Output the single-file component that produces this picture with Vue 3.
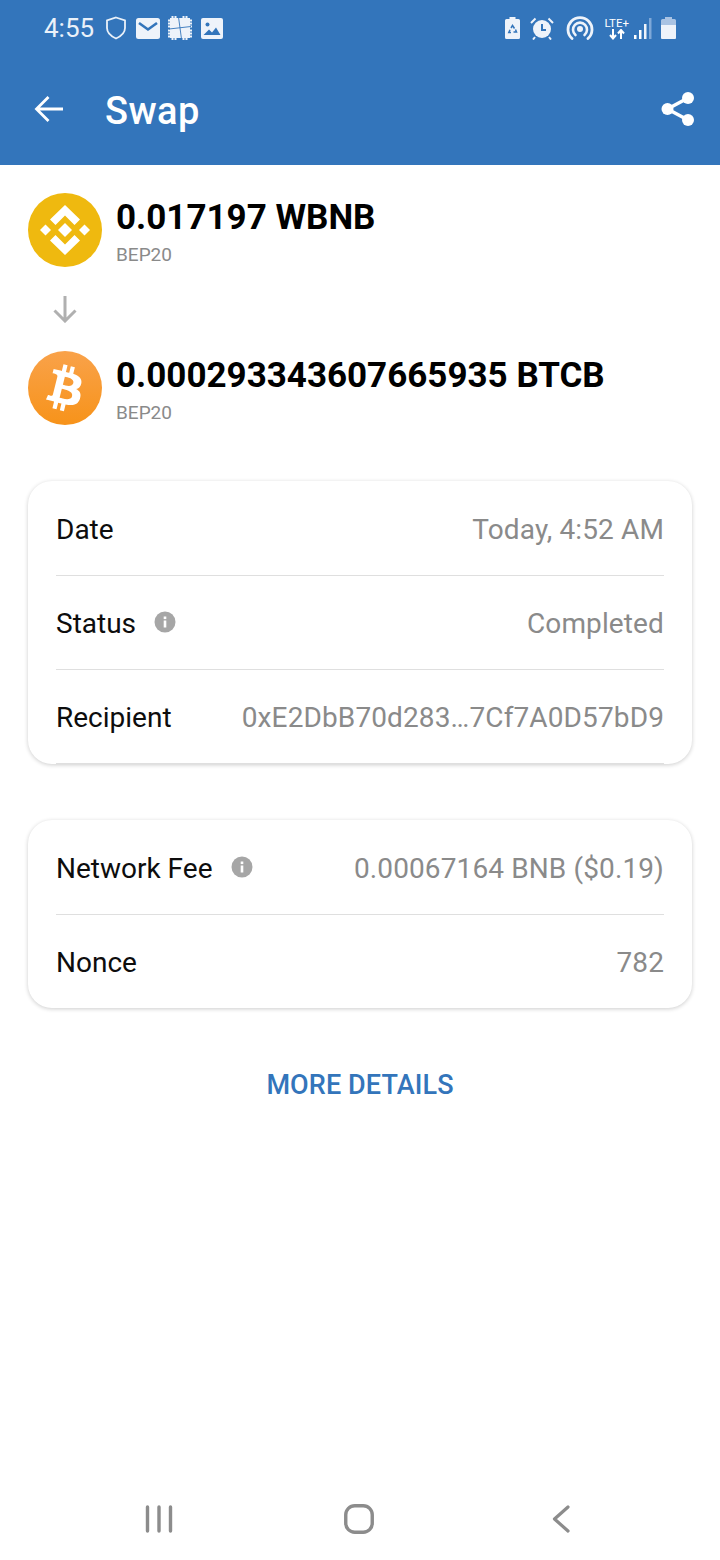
<template>
  <div class="screen">
    <header class="top">
      <div class="status">
        <div class="status-left">
          <span class="clock">4:55</span>
          <svg class="shield" width="20" height="24" viewBox="0 0 20 24"><path d="M10 1.500 19 4.500V12c0 4.500-3.500 8-9 10.500C4.500 20 1 16.500 1 12V4.500Z" fill="none" stroke="#eaf1f9" stroke-width="1.800"/></svg>
          <svg width="24" height="21" viewBox="0 0 24 21"><rect width="24" height="21" rx="2.500" fill="#eef3fa"/><path d="M3 5 12 11.500 21 5" fill="none" stroke="#3375bb" stroke-width="2.600"/></svg>
          <svg class="patch" width="24" height="24" viewBox="0 0 24 24"><rect x="2" y="2" width="20" height="20" fill="#eef3fa"/><path d="M0 4.500H4M0 7.500H4M0 10.500H4M0 14.500H4M0 17.500H4M0 20.500H4M20 4.500H24M20 7.500H24M20 10.500H24M20 14.500H24M20 17.500H24M20 20.500H24M4.500 0V4M7.500 0V4M15.500 0V4M18.500 0V4M4.500 20V24M7.500 20V24M15.500 20V24M18.500 20V24" stroke="#eef3fa" stroke-width="2"/><path d="M10.500 1 13.500 23M1 13 23 10.500" stroke="#3375bb" stroke-width="0.900"/></svg>
          <svg class="photo" width="22" height="21" viewBox="0 0 22 21"><rect width="22" height="21" rx="2" fill="#eef3fa"/><circle cx="6.500" cy="6.500" r="2" fill="#3375bb"/><path d="M2.500 17 8 11.500l3 3 4-5 4.500 7.500Z" fill="#3375bb"/></svg>
        </div>
        <div class="status-right">
          <svg width="15" height="22" viewBox="0 0 15 22"><path d="M4.500 0h6v2H13.500a1.500 1.500 0 0 1 1.500 1.500V20.500A1.500 1.500 0 0 1 13.500 22H1.500A1.500 1.500 0 0 1 0 20.500V3.500A1.500 1.500 0 0 1 1.500 2H4.500Z" fill="#eef3fa"/><path d="M6 11 7.500 8.500 9.500 11.500M10.500 12.500 11.500 15H8.500M6 15.500H3.800L5 12.800" fill="none" stroke="#3375bb" stroke-width="1.500"/></svg>
          <svg width="24" height="23" viewBox="0 0 24 23" style="margin-left:10px"><circle cx="12" cy="12" r="9" fill="#eef3fa"/><path d="M12 7v6h4" fill="none" stroke="#3375bb" stroke-width="2"/><path d="M1 6 5.500 1.500M23 6 18.500 1.500M5 20 3 22.500M19 20 21 22.500" stroke="#eef3fa" stroke-width="2"/></svg>
          <svg width="28" height="24" viewBox="0 0 28 24" style="margin-left:12px"><path d="M6 22.500A12 12 0 1 1 22 22.500" fill="none" stroke="#eef3fa" stroke-width="2.800" stroke-linecap="round"/><path d="M9.500 19A7 7 0 1 1 18.500 19" fill="none" stroke="#eef3fa" stroke-width="2.600" stroke-linecap="round"/><circle cx="14" cy="13" r="3" fill="#eef3fa"/></svg>
          <div class="lte">
            <span>LTE+</span>
            <svg width="16" height="11" viewBox="0 0 16 11"><path d="M4 0V9M1 6l3 3.500L7 6M12 10V1.500M9 4.500l3-3.500 3 3.500" fill="none" stroke="#fff" stroke-width="2"/></svg>
          </div>
          <svg width="18" height="21" viewBox="0 0 18 21" style="margin-left:5px"><rect x="0" y="17" width="2.500" height="4" fill="#fff"/><rect x="5" y="12" width="2.500" height="9" fill="#fff"/><rect x="10" y="6" width="2.500" height="15" fill="#eef3fa"/><rect x="15" y="0" width="2.500" height="21" fill="#7ea8d8"/></svg>
          <svg width="15" height="22" viewBox="0 0 15 22" style="margin-left:9px"><path d="M4 0h7v2H13.500A1.500 1.500 0 0 1 15 3.500V20.500A1.500 1.500 0 0 1 13.500 22H1.500A1.500 1.500 0 0 1 0 20.500V3.500A1.500 1.500 0 0 1 1.500 2H4Z" fill="#a9c3e3"/><path d="M0 8H15V20.500A1.500 1.500 0 0 1 13.500 22H1.500A1.500 1.500 0 0 1 0 20.500Z" fill="#eef3fa"/></svg>
        </div>
      </div>
      <div class="toolbar">
        <svg class="back" width="30" height="28" viewBox="0 0 30 28"><path d="M29 14H3M14.500 2 2.500 14l12 12" fill="none" stroke="#fff" stroke-width="2.800"/></svg>
        <span class="title">Swap</span>
        <svg class="share" width="34" height="36" viewBox="0 0 34 36"><path d="M27 7 6.500 18 27 29" fill="none" stroke="#fff" stroke-width="3.500"/><circle cx="27" cy="7" r="6" fill="#fff"/><circle cx="6.500" cy="18" r="6" fill="#fff"/><circle cx="27" cy="29" r="6" fill="#fff"/></svg>
      </div>
    </header>

    <section class="assets">
      <div class="asset">
        <svg width="74" height="74" viewBox="0 0 74 74">
          <circle cx="37" cy="37" r="37" fill="#efb90f"/>
          <g fill="#fff">
            <path d="M37 12 52 26.500 46.500 32 37 22.500 27.500 32 22 26.500Z"/>
            <path d="M37 62 52 47.500 46.500 42 37 51.500 27.500 42 22 47.500Z"/>
            <path d="M37 30 44 37 37 44 30 37Z"/>
            <path d="M17.500 31.500 23 37 17.500 42.500 12 37Z"/>
            <path d="M56.500 31.500 62 37 56.500 42.500 51 37Z"/>
          </g>
        </svg>
        <div class="asset-text">
          <div class="amount">0.017197 WBNB</div>
          <div class="chain">BEP20</div>
        </div>
      </div>
      <svg class="down" width="26" height="28" viewBox="0 0 26 28"><path d="M13 1V26M2.500 15.500 13 26 23.500 15.500" fill="none" stroke="#b0b0b0" stroke-width="3"/></svg>
      <div class="asset">
        <svg width="74" height="74" viewBox="0 0 24 24">
          <defs>
            <linearGradient id="btc" x1="0" y1="0" x2="0" y2="1">
              <stop offset="0" stop-color="#f9a24a"/>
              <stop offset="1" stop-color="#f7931a"/>
            </linearGradient>
          </defs>
          <circle cx="12" cy="12" r="12" fill="url(#btc)"/>
          <path fill="#fff" d="M17.310 10.430c.24-1.590-.974-2.450-2.640-3.030l.54-2.153-1.315-.33-.525 2.107c-.345-.087-.705-.167-1.064-.25l.526-2.127-1.320-.33-.54 2.165c-.285-.067-.565-.132-.84-.2l-1.815-.45-.35 1.407s.975.225.955.236c.535.136.63.486.615.766l-1.477 5.920c-.075.166-.24.406-.614.314.015.02-.96-.24-.96-.24l-.66 1.510 1.710.426.93.242-.54 2.190 1.320.327.54-2.170c.36.1.705.19 1.050.273l-.51 2.154 1.320.33.545-2.190c2.240.427 3.930.257 4.640-1.774.57-1.637-.03-2.580-1.217-3.196.854-.193 1.500-.76 1.680-1.930h.01zm-3.010 4.220c-.404 1.640-3.157.75-4.050.53l.72-2.900c.896.23 3.757.67 3.330 2.370zm.41-4.240c-.37 1.490-2.662.735-3.405.55l.654-2.640c.744.18 3.137.524 2.750 2.084v.006z"/>
        </svg>
        <div class="asset-text">
          <div class="amount">0.000293343607665935 BTCB</div>
          <div class="chain">BEP20</div>
        </div>
      </div>
    </section>

    <section class="card">
      <div v-for="row in detailRows" :key="row.label" class="row">
        <span class="label">{{ row.label }}</span>
        <svg v-if="row.info" class="info" width="22" height="22" viewBox="0 0 22 22"><circle cx="11" cy="11" r="10.500" fill="#a6a6a6"/><rect x="9.700" y="9.500" width="2.600" height="7" fill="#fff"/><rect x="9.700" y="5.500" width="2.600" height="2.600" fill="#fff"/></svg>
        <span class="value">{{ row.value }}</span>
      </div>
    </section>

    <section class="card card-fee">
      <div v-for="row in feeRows" :key="row.label" class="row">
        <span class="label">{{ row.label }}</span>
        <svg v-if="row.info" class="info" width="22" height="22" viewBox="0 0 22 22"><circle cx="11" cy="11" r="10.500" fill="#a6a6a6"/><rect x="9.700" y="9.500" width="2.600" height="7" fill="#fff"/><rect x="9.700" y="5.500" width="2.600" height="2.600" fill="#fff"/></svg>
        <span class="value">{{ row.value }}</span>
      </div>
    </section>

    <div class="more">MORE DETAILS</div>

    <nav class="navbar">
      <svg width="28" height="28" viewBox="0 0 28 28"><path d="M2.500 2V26M14 2V26M25.500 2V26" stroke="#8c8c8c" stroke-width="3.400" stroke-linecap="round"/></svg>
      <svg class="nav-home" width="30" height="30" viewBox="0 0 30 30"><rect x="1.750" y="1.750" width="26.500" height="26.500" rx="9" fill="none" stroke="#8c8c8c" stroke-width="3.400"/></svg>
      <svg class="nav-back" width="18" height="28" viewBox="0 0 18 28"><path d="M16 2 2.500 14 16 26" fill="none" stroke="#8c8c8c" stroke-width="3.200" stroke-linecap="round" stroke-linejoin="round"/></svg>
    </nav>
  </div>
</template>

<script setup>
const detailRows = [
  { label: "Date", value: "Today, 4:52 AM" },
  { label: "Status", value: "Completed", info: true },
  { label: "Recipient", value: "0xE2DbB70d283…7Cf7A0D57bD9" },
];

const feeRows = [
  { label: "Network Fee", value: "0.00067164 BNB ($0.19)", info: true },
  { label: "Nonce", value: "782" },
];
</script>

<style scoped>
.screen {
  width: 720px;
  height: 1560px;
  display: flex;
  flex-direction: column;
  background: #fff;
  font-family: Roboto, "Liberation Sans", sans-serif;
  overflow: hidden;
}

.top {
  height: 165px;
  background: #3375bb;
  display: flex;
  flex-direction: column;
}

.status {
  height: 56px;
  padding: 0 44px;
  display: flex;
  align-items: center;
  justify-content: space-between;
}

.status-left {
  display: flex;
  align-items: center;
  gap: 10px;
}

.clock {
  font-size: 26px;
  color: #eaf1f9;
}

.shield {
  margin-left: 2px;
}

.patch {
  margin-left: -2px;
}

.photo {
  margin-left: -1px;
}

.status-right {
  display: flex;
  align-items: center;
}

.lte {
  margin-left: 10px;
  display: flex;
  flex-direction: column;
  align-items: center;
  font-size: 11.500px;
  line-height: 12px;
  color: #fff;
}

.toolbar {
  flex: 1;
  display: flex;
  align-items: center;
  padding: 0 25px 3px 34px;
}

.title {
  margin-left: 41px;
  margin-top: 4px;
  font-size: 38px;
  font-weight: 500;
  letter-spacing: 0.4px;
  color: #fff;
}

.share {
  margin-left: auto;
}

.assets {
  padding: 28px 28px 0;
  display: flex;
  flex-direction: column;
}

.asset {
  height: 74px;
  display: flex;
  align-items: flex-start;
  gap: 14px;
}

.asset-text {
  padding-top: 1px;
  display: flex;
  flex-direction: column;
}

.amount {
  font-size: 35px;
  line-height: 47px;
  font-weight: 700;
  color: #000;
}

.chain {
  font-size: 19px;
  line-height: 28px;
  color: #8a8a8a;
}

.down {
  margin: 28px 0 28px 24px;
}

.card {
  margin: 56px 28px 0;
  padding: 1px 28px 0;
  border-radius: 24px;
  background: #fff;
  box-shadow: 0 1px 4px rgba(0, 0, 0, 0.2);
}

.card-fee {
  margin-top: 56px;
}

.row {
  box-sizing: border-box;
  height: 94px;
  padding-top: 2px;
  display: flex;
  align-items: center;
  border-bottom: 1px solid #dfdfdf;
}

.card-fee .row:last-child {
  height: 93px;
  border-bottom: none;
}

.label {
  font-size: 28px;
  color: #0d0d0d;
}

.info {
  margin-left: 18px;
  margin-top: -4px;
}

.value {
  margin-left: auto;
  font-size: 28px;
  letter-spacing: 0.12px;
  color: #8a8a8a;
  white-space: nowrap;
}

.more {
  margin-top: 61px;
  text-align: center;
  font-size: 27px;
  font-weight: 500;
  letter-spacing: 0.1px;
  color: #3375bb;
}

.navbar {
  margin-top: auto;
  height: 82px;
  padding-left: 145px;
  display: flex;
  align-items: center;
}

.nav-home {
  margin-left: 171px;
}

.nav-back {
  margin-left: 178px;
}
</style>
